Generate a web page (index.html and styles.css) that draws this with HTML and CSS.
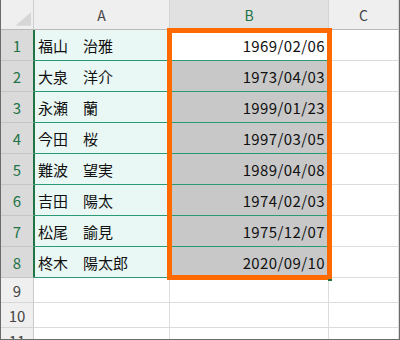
FILE: index.html
```html
<!DOCTYPE html>
<html lang="ja">
<head>
<meta charset="utf-8">
<link rel="stylesheet" href="styles.css">
</head>
<body>
<div class="frame">
  <div class="sheet">
    <div class="corner"><svg width="33" height="29" viewBox="0 0 33 29"><polygon points="31,12 31,26 15,26" fill="#d6d6d6"/></svg></div>
    <div class="colhead">A</div>
    <div class="colhead sel">B</div>
    <div class="colhead">C</div>

    <div class="rowhead sel">1</div><div class="name">福山　治雅</div><div class="date first">1969/02/06</div><div class="cell"></div>
    <div class="rowhead sel">2</div><div class="name">大泉　洋介</div><div class="date">1973/04/03</div><div class="cell"></div>
    <div class="rowhead sel">3</div><div class="name">永瀬　蘭</div><div class="date">1999/01/23</div><div class="cell"></div>
    <div class="rowhead sel">4</div><div class="name">今田　桜</div><div class="date">1997/03/05</div><div class="cell"></div>
    <div class="rowhead sel">5</div><div class="name">難波　望実</div><div class="date">1989/04/08</div><div class="cell"></div>
    <div class="rowhead sel">6</div><div class="name">吉田　陽太</div><div class="date">1974/02/03</div><div class="cell"></div>
    <div class="rowhead sel">7</div><div class="name">松尾　諭見</div><div class="date">1975/12/07</div><div class="cell"></div>
    <div class="rowhead sel">8</div><div class="name">柊木　陽太郎</div><div class="date">2020/09/10</div><div class="cell"></div>
    <div class="rowhead">9</div><div class="cell"></div><div class="cell"></div><div class="cell"></div>
    <div class="rowhead">10</div><div class="cell"></div><div class="cell"></div><div class="cell"></div>
    <div class="rowhead">11</div><div class="cell"></div><div class="cell"></div><div class="cell"></div>
  </div>
  <div class="highlight"></div>
  <div class="handle"></div>
</div>
</body>
</html>
```

FILE: styles.css
```css
html, body {
  margin: 0;
  padding: 0;
  background: #ffffff;
}

.frame {
  position: relative;
  width: 400px;
  height: 340px;
  box-sizing: border-box;
  border-left: 1px solid #6b6b6b;
  border-right: 1px solid #6b6b6b;
  border-bottom: 1px solid #6b6b6b;
  overflow: hidden;
  font-family: "Noto Sans CJK JP", "Noto Sans", sans-serif;
}

.sheet {
  display: grid;
  grid-template-columns: 33px 136px 159px 70px;
  grid-template-rows: 30px repeat(8, 31px) repeat(3, 25px);
}

.sheet > div {
  box-sizing: border-box;
  display: flex;
  align-items: center;
  overflow: hidden;
  white-space: nowrap;
}

.corner {
  background: #efefef;
  border-right: 1px solid #cfcfcf;
  border-bottom: 1px solid #b9b9b9;
  align-items: flex-start !important;
}

.corner svg {
  display: block;
}

.colhead {
  justify-content: center;
  background: #efefef;
  border-right: 1px solid #d4d4d4;
  border-bottom: 1px solid #b9b9b9;
  font-size: 14px;
  color: #444444;
  padding-top: 1px;
}

.colhead.sel {
  background: #e1e1e1;
  color: #217346;
}

.rowhead {
  justify-content: center;
  background: #efefef;
  border-right: 1px solid #c9c9c9;
  border-bottom: 1px solid #d6d6d6;
  font-size: 15px;
  color: #444444;
  padding-top: 1px;
}

.rowhead.sel {
  background: #dadada;
  color: #217346;
  border-right-color: #217346;
  border-bottom-color: #c6c6c6;
}

.cell {
  border-right: 1px solid #dcdcdc;
  border-bottom: 1px solid #dcdcdc;
}

.name {
  background: #e9f8f4;
  border-bottom: 1px solid #2a9a76;
  box-shadow: inset 1px 0 0 #217346;
  padding-left: 4px;
  font-size: 15px;
  color: #111111;
}

.date {
  justify-content: flex-end;
  background: #c8c8c8;
  border-bottom: 1px solid #2a9a76;
  padding-right: 4px;
  font-size: 15px;
  color: #111111;
  letter-spacing: 0.4px;
}

.date.first {
  background: #ffffff;
}

.highlight {
  position: absolute;
  left: 166px;
  top: 28px;
  width: 165px;
  height: 252px;
  box-sizing: border-box;
  border: 5px solid #ff6a00;
}

.handle {
  position: absolute;
  left: 327px;
  top: 279px;
  width: 4px;
  height: 2px;
  background: #217346;
}
```
